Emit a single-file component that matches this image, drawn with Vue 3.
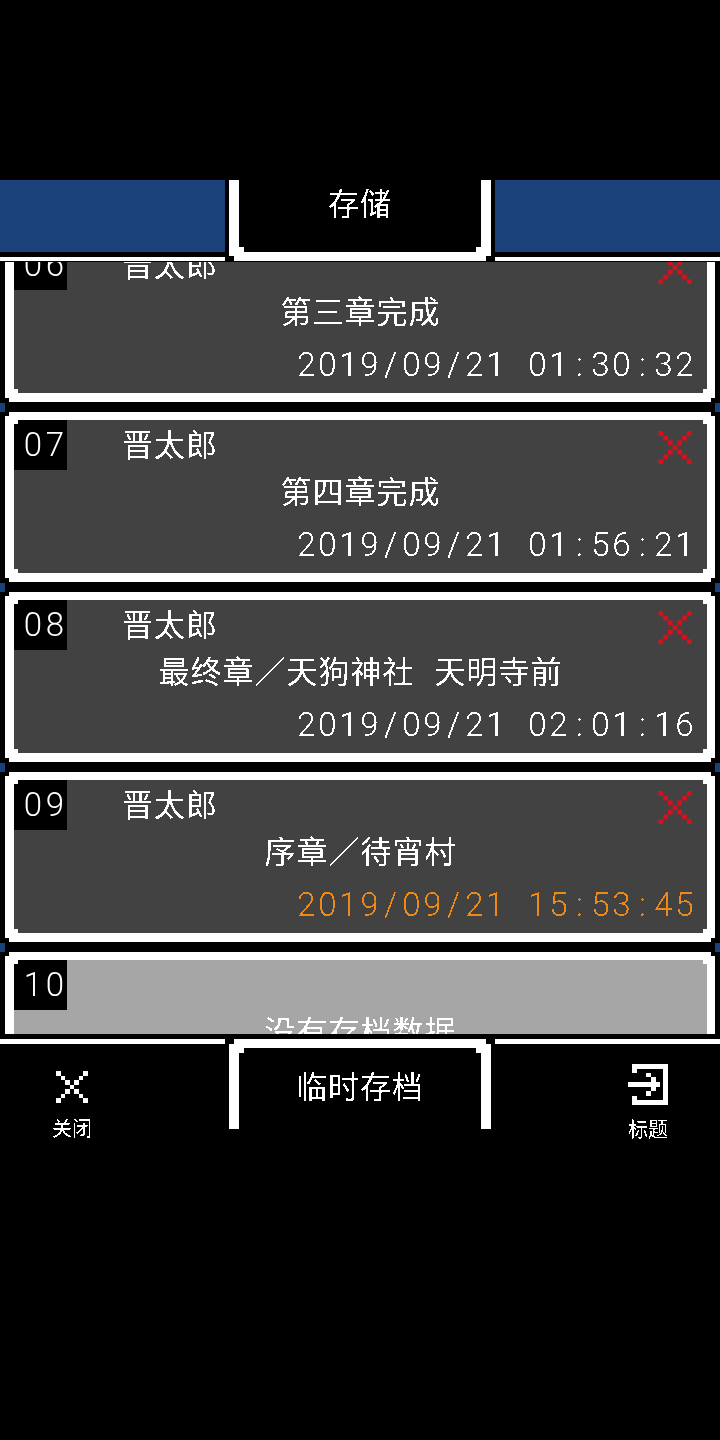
<template>
  <div class="screen">
    <!-- threshold on text alpha, gives the hard bitmap font edge -->
    <svg class="defs" width="0" height="0">
      <filter id="bitmap" color-interpolation-filters="sRGB">
        <feComponentTransfer>
          <feFuncA type="discrete" tableValues="0 1" />
        </feComponentTransfer>
      </filter>
    </svg>

    <header class="top">
      <div class="side">
        <div class="band" />
        <div class="rule" />
      </div>
      <div class="tab tab-top">
        <div class="tab-inner"><span class="jp tab-title">存储</span></div>
      </div>
      <div class="side">
        <div class="band" />
        <div class="rule" />
      </div>
    </header>

    <div class="list">
      <div class="list-scroll">
        <template v-for="slot in slots" :key="slot.no">
          <div class="card">
            <div class="face" :class="{ empty: !slot.name }">
              <div class="head">
                <div class="no digits">
                  <span v-for="(ch, i) in slot.no" :key="i">{{ ch }}</span>
                </div>
                <div v-if="slot.name" class="jp name">{{ slot.name }}</div>
                <svg v-if="slot.name" class="del" viewBox="0 0 7 7">
                  <rect v-for="c in crossCells" :key="c[0] + '-' + c[1]" :x="c[0]" :y="c[1]" width="1" height="1" />
                </svg>
              </div>
              <div class="jp chapter">{{ slot.chapter }}</div>
              <div v-if="slot.date" class="digits date" :class="{ latest: slot.latest }">
                <span v-for="(ch, i) in slot.date" :key="i">{{ ch }}</span>
              </div>
            </div>
          </div>
          <div class="gap"><i /><i /></div>
        </template>
      </div>
    </div>

    <footer class="bottom">
      <div class="side">
        <div class="rule rule-low" />
        <div class="btn">
          <svg class="close" viewBox="0 0 7 7" shape-rendering="crispEdges">
            <rect v-for="c in crossCells" :key="c[0] + '-' + c[1]" :x="c[0]" :y="c[1]" width="1" height="1" />
          </svg>
          <span class="jp btn-label">关闭</span>
        </div>
      </div>
      <div class="tab tab-bottom">
        <div class="tab-inner"><span class="jp tab-title">临时存档</span></div>
      </div>
      <div class="side side-right">
        <div class="rule rule-low" />
        <div class="btn">
          <svg class="exit" viewBox="0 0 40 41" fill="#fff" shape-rendering="crispEdges">
            <path d="M4 0h36v41H4v-9h5v4h26V5H9v4H4z" />
            <path d="M0 18h32v5H0zM18 9h5v4h-5zM23 13h5v5h-5zM23 23h5v4h-5zM18 27h5v5h-5z" />
          </svg>
          <span class="jp btn-label">标题</span>
        </div>
      </div>
    </footer>
  </div>
</template>

<script setup>
const crossCells = []
for (let i = 0; i < 7; i++) {
  crossCells.push([i, i])
  if (i !== 3) crossCells.push([6 - i, i])
}

const slots = [
  { no: '06', name: '晋太郎', chapter: '第三章完成', date: '2019/09/21 01:30:32' },
  { no: '07', name: '晋太郎', chapter: '第四章完成', date: '2019/09/21 01:56:21' },
  { no: '08', name: '晋太郎', chapter: '最终章／天狗神社 天明寺前', date: '2019/09/21 02:01:16' },
  { no: '09', name: '晋太郎', chapter: '序章／待宵村', date: '2019/09/21 15:53:45', latest: true },
  { no: '10', chapter: '没有存档数据' },
]
</script>

<style>
html,
body {
  background: #000;
}
</style>

<style scoped>
.screen {
  width: 720px;
  height: 1440px;
  background: #000;
  color: #fff;
  padding-top: 180px;
  box-sizing: border-box;
  overflow: hidden;
}
.defs {
  position: absolute;
}
.jp {
  font-family: "Noto Sans CJK SC", "Noto Sans CJK JP", sans-serif;
  font-size: 31px;
  letter-spacing: 1px;
  word-spacing: 12px;
  line-height: 1;
  white-space: pre;
  filter: url(#bitmap);
}
/* the date font is monospaced in the game, each char gets its own cell */
.digits {
  display: flex;
  font-family: Roboto, "Liberation Sans", sans-serif;
  font-weight: 300;
  font-size: 33px;
  line-height: 1;
  white-space: pre;
  filter: url(#bitmap);
}
.digits span {
  width: 21px;
  text-align: center;
}

/* top bar */
.top {
  display: flex;
  justify-content: space-between;
  height: 81px;
}
.side {
  width: 225px;
}
.band {
  height: 72px;
  background: #1a417a;
}
.rule {
  height: 4px;
  margin-top: 5px;
  background: #fff;
}
.rule-low {
  height: 5px;
  margin-top: 0;
}
.tab {
  width: 262px;
  background: #fff;
}
.tab-top {
  height: 81px;
  padding: 0 10px 9px;
  box-sizing: border-box;
  clip-path: polygon(0 0, 100% 0, 100% calc(100% - 5px), calc(100% - 5px) calc(100% - 5px), calc(100% - 5px) 100%, 5px 100%, 5px calc(100% - 5px), 0 calc(100% - 5px));
}
.tab-top .tab-inner {
  height: 100%;
  padding-bottom: 30px;
  clip-path: polygon(0 0, 100% 0, 100% calc(100% - 5px), calc(100% - 5px) calc(100% - 5px), calc(100% - 5px) 100%, 5px 100%, 5px calc(100% - 5px), 0 calc(100% - 5px));
}
.tab-inner {
  background: #000;
  display: flex;
  align-items: center;
  justify-content: center;
  box-sizing: border-box;
}

/* save slots */
.list {
  height: 772px;
  margin-top: 1px;
  overflow: hidden;
}
.list-scroll {
  margin-top: -30px;
}
.card {
  height: 170px;
  margin: 0 5px;
  padding: 8px 8px 9px 9px;
  box-sizing: border-box;
  background: #fff;
  clip-path: polygon(4px 0, calc(100% - 4px) 0, calc(100% - 4px) 4px, 100% 4px, 100% calc(100% - 4px), calc(100% - 4px) calc(100% - 4px), calc(100% - 4px) 100%, 4px 100%, 4px calc(100% - 4px), 0 calc(100% - 4px), 0 4px, 4px 4px);
}
.face {
  height: 100%;
  background: #424242;
  clip-path: polygon(4px 0, calc(100% - 4px) 0, calc(100% - 4px) 4px, 100% 4px, 100% calc(100% - 4px), calc(100% - 4px) calc(100% - 4px), calc(100% - 4px) 100%, 4px 100%, 4px calc(100% - 4px), 0 calc(100% - 4px), 0 4px, 4px 4px);
}
.face.empty {
  background: #a6a6a6;
}
.head {
  display: flex;
  height: 50px;
  align-items: center;
}
.no {
  width: 53px;
  height: 50px;
  background: #000;
  line-height: 50px;
  box-sizing: border-box;
  padding-left: 8px;
}
.no span {
  width: 22px;
}
.name {
  margin-left: 55px;
  flex: 1;
  margin-top: -5px;
}
.del {
  width: 34px;
  height: 33px;
  fill: #d8101c;
  margin: 4px 15px 0 0;
}
.chapter {
  height: 44px;
  line-height: 40px;
  text-align: center;
}
.date {
  height: 59px;
  line-height: 62px;
  justify-content: flex-end;
  padding-right: 12px;
}
.date.latest {
  color: #ee8a14;
}
.gap {
  display: flex;
  justify-content: space-between;
  height: 10px;
}
.gap i {
  width: 5px;
  height: 9px;
  margin-top: 1px;
  background: #1a417a;
}

/* bottom bar */
.bottom {
  display: flex;
  justify-content: space-between;
  margin-top: 5px;
  height: 90px;
}
.btn {
  width: 144px;
  display: flex;
  flex-direction: column;
  align-items: center;
}
.side-right .btn {
  margin-left: auto;
}
.close {
  width: 32px;
  height: 32px;
  margin-top: 27px;
  fill: #fff;
}
.exit {
  width: 40px;
  height: 41px;
  margin-top: 20px;
}
.btn-label {
  font-size: 20px;
  letter-spacing: 0;
  margin-top: 15px;
}
.side-right .btn-label {
  margin-top: 14px;
}
.tab-bottom {
  height: 90px;
  padding: 9px 10px 0;
  box-sizing: border-box;
  clip-path: polygon(5px 0, calc(100% - 5px) 0, calc(100% - 5px) 5px, 100% 5px, 100% 100%, 0 100%, 0 5px, 5px 5px);
}
.tab-bottom .tab-inner {
  height: 100%;
  padding-bottom: 9px;
  clip-path: polygon(5px 0, calc(100% - 5px) 0, calc(100% - 5px) 5px, 100% 5px, 100% 100%, 0 100%, 0 5px, 5px 5px);
}
</style>
